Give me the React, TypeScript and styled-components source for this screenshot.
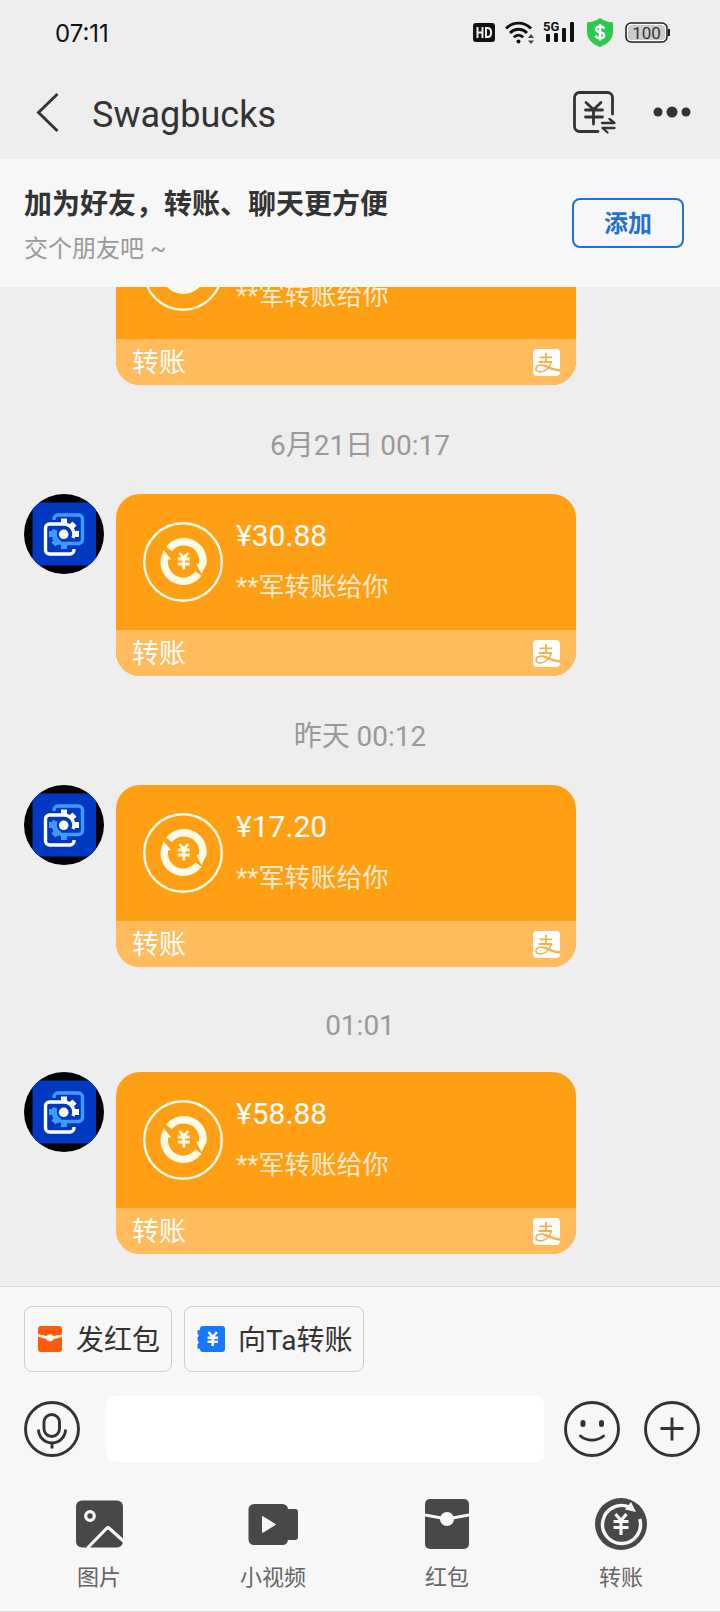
import React from 'react';
import styled, { createGlobalStyle } from 'styled-components';

const GlobalStyle = createGlobalStyle`
  *, *::before, *::after { box-sizing: border-box; }
  body {
    margin: 0;
    background: #eeeeee;
    color: #333333;
    font-family: Roboto, "Noto Sans CJK SC", sans-serif;
  }
  button, input { font: inherit; color: inherit; }
  svg { display: block; flex: none; }
`;

const Screen = styled.div`
  display: flex;
  flex-direction: column;
  height: 100vh;
`;

const StatusBar = styled.div`
  display: flex;
  align-items: center;
  justify-content: space-between;
  height: 65px;
  padding: 0 50px 0 55px;
  color: #111111;
`;

const Clock = styled.time`
  padding-top: 2px;
  font: 24px/32px Inter, Roboto, sans-serif;
`;

const StatusIcons = styled.div`
  display: flex;
  align-items: center;
`;

const StatusIcon = styled.span<{ $gap: number }>`
  margin-left: ${(p) => p.$gap}px;
`;

const Header = styled.header`
  display: flex;
  align-items: center;
  height: 94px;
  padding: 0 28px 0 32px;
`;

const Title = styled.h1`
  flex: 1;
  margin: 0;
  padding: 6px 0 0 32px;
  font-size: 36px;
  font-weight: 400;
  line-height: 44px;
`;

const IconButton = styled.button`
  display: flex;
  align-items: center;
  justify-content: center;
  flex: none;
  padding: 0;
  border: 0;
  background: none;
  cursor: pointer;
`;

const HeaderActions = styled.div`
  display: flex;
  align-items: center;
  gap: 36px;
`;

const FriendBanner = styled.section`
  display: flex;
  align-items: center;
  justify-content: space-between;
  height: 128px;
  flex: none;
  padding: 0 36px 0 24px;
  background: #f7f7f7;
`;

const BannerCopy = styled.div`
  padding-top: 4px;
`;

const BannerTitle = styled.h2`
  margin: 0;
  font-size: 28px;
  font-weight: 700;
  line-height: 48px;
`;

const BannerText = styled.p`
  margin: 0;
  font-size: 24px;
  line-height: 40px;
  color: #999999;
`;

const AddButton = styled.button`
  width: 112px;
  height: 50px;
  padding: 2px 0 0;
  border: 2px solid #1f72d2;
  border-radius: 8px;
  background: none;
  color: #1f72d2;
  font-size: 24px;
  font-weight: 700;
  line-height: 32px;
  cursor: pointer;
`;

const ChatScroller = styled.main`
  display: flex;
  flex: 1;
  flex-direction: column-reverse;
  min-height: 0;
  overflow-y: auto;
  scrollbar-width: none;
`;

const MessageList = styled.div`
  padding: 0 24px 32px;
`;

const Timestamp = styled.time<{ $short?: boolean }>`
  display: block;
  padding: 42px 0 29px;
  font-size: 28px;
  line-height: ${(p) => (p.$short ? 34 : 38)}px;
  text-align: center;
  color: #999999;
`;

const MessageRow = styled.article`
  display: flex;
  align-items: flex-start;
  gap: 12px;
`;

const Card = styled.a`
  display: block;
  width: 100%;
  max-width: 460px;
  overflow: hidden;
  border-radius: 24px;
  background: #ff9f14;
  color: #ffffff;
  text-decoration: none;
`;

const CardBody = styled.div`
  display: flex;
  gap: 13px;
  height: 136px;
  padding: 20px 27px 0;
`;

const CardIcon = styled.div`
  padding-top: 8px;
`;

const Amount = styled.div`
  height: 42px;
  font-size: 30px;
  line-height: 44px;
`;

const Note = styled.div`
  padding-top: 11px;
  font-size: 26px;
  line-height: 40px;
  color: rgba(255, 255, 255, 0.8);
`;

const CardFooter = styled.div`
  display: flex;
  align-items: center;
  justify-content: space-between;
  height: 46px;
  padding: 0 16px;
  background: #ffbb5c;
  font-size: 27px;
  line-height: 40px;
`;

const FooterLabel = styled.span`
  padding-top: 2px;
`;

const Composer = styled.footer`
  flex: none;
  padding-top: 19px;
  border-top: 1px solid #dcdcdc;
  border-bottom: 1px solid #dcdcdc;
  background: #f7f7f7;
`;

const QuickActions = styled.div`
  display: flex;
  gap: 12px;
  padding: 0 24px;
`;

const QuickButton = styled.button`
  display: flex;
  align-items: center;
  gap: 13px;
  height: 66px;
  padding: 0 11px 0 12px;
  border: 1px solid #cccccc;
  border-radius: 8px;
  background: none;
  font-size: 28px;
  line-height: 40px;
  cursor: pointer;
`;

const QuickLabel = styled.span`
  padding-top: 4px;
`;

const InputRow = styled.div`
  display: flex;
  align-items: center;
  gap: 20px;
  padding: 24px 20px 0 24px;
`;

const MessageInput = styled.input`
  flex: 1;
  min-width: 0;
  height: 66px;
  margin-left: 6px;
  padding: 0 16px;
  border: 0;
  border-radius: 8px;
  background: #ffffff;
  font-size: 28px;
`;

const InputActions = styled.div`
  display: flex;
  gap: 24px;
`;

const Tools = styled.nav`
  display: grid;
  grid-template-columns: repeat(4, 1fr);
  padding: 36px 12px 19px;
`;

const ToolButton = styled.button`
  display: flex;
  flex-direction: column;
  align-items: center;
  gap: 14px;
  padding: 0;
  border: 0;
  background: none;
  color: #666666;
  font-size: 22px;
  line-height: 28px;
  cursor: pointer;
`;

function HdIcon() {
  return (
    <svg width="22" height="19" viewBox="0 0 22 19">
      <rect width="22" height="19" rx="3" fill="#111" />
      <path d="M4.500 4v11M9.500 4v11M4.500 9.500h5M13 5v9h1.500c2.600 0 3.600-1.600 3.600-4.500S17 5 14.500 5z" fill="none" stroke="#eee" strokeWidth="2" />
    </svg>
  );
}

function WifiIcon() {
  return (
    <svg width="30" height="24" viewBox="0 0 30 24" fill="none" stroke="#111" strokeWidth="2.900">
      <path d="M1 7.500C8 .3 19 .3 26 7.500" />
      <path d="M5 12c5-5 12-5 17 0" />
      <path d="M8.800 16.300c2.800-2.800 6.600-2.800 9.400 0" />
      <circle cx="13.500" cy="20.500" r="2" fill="#111" stroke="none" />
      <path d="M23 17l3-4 3 4zM23 19.500l3 3.500 3-3.500z" fill="#444" stroke="none" />
    </svg>
  );
}

function SignalIcon() {
  return (
    <svg width="32" height="23" viewBox="0 0 32 23" fill="#111">
      <text x="0" y="10" fontFamily="Roboto, sans-serif" fontSize="13" fontWeight="700">5G</text>
      <rect x="3" y="13" width="4" height="8" rx="1" />
      <rect x="11" y="12" width="4" height="9" rx="1" />
      <rect x="19" y="7" width="4" height="14" rx="1" />
      <rect x="27" y="1" width="4" height="20" rx="1" />
    </svg>
  );
}

function ShieldIcon() {
  return (
    <svg width="26" height="29" viewBox="0 0 26 29">
      <path d="M13 0c3.500 2.600 8 4 13 4.500V14c0 7-5 12-13 15C5 26 0 21 0 14V4.500C5 4 9.500 2.600 13 0z" fill="#2dc84d" />
      <path d="M17.200 10.600c-.6-1.500-2-2.200-4.200-2.200-2.500 0-4 1.100-4 2.900 0 4.300 8.200 1.700 8.200 6 0 1.900-1.600 3-4.200 3-2.400 0-3.900-.9-4.400-2.600M13 6v16.500" fill="none" stroke="#fff" strokeWidth="2.400" />
    </svg>
  );
}

function BatteryIcon() {
  return (
    <svg width="45" height="21" viewBox="0 0 45 21">
      <rect x="1" y="1" width="41" height="19" rx="5" fill="#fff" stroke="#222" strokeWidth="1.600" />
      <rect x="3" y="3" width="37" height="15" rx="3" fill="#cccccc" />
      <path d="M44 7v7" stroke="#222" strokeWidth="2" />
      <text x="21.500" y="16.500" textAnchor="middle" fontFamily="Roboto, sans-serif" fontSize="17" fill="#333">100</text>
    </svg>
  );
}

function BackIcon() {
  return (
    <svg width="28" height="40" viewBox="0 0 28 40" fill="none" stroke="#333" strokeWidth="2.900">
      <path d="M25.500 2L6.500 20.500l19 18.500" />
    </svg>
  );
}

function LedgerIcon() {
  return (
    <svg width="43" height="43" viewBox="0 0 43 43" fill="none" stroke="#333" strokeWidth="2.800" strokeLinecap="round" strokeLinejoin="round">
      <path d="M25 40.500H6.500a5 5 0 0 1-5-5v-29a5 5 0 0 1 5-5h28a5 5 0 0 1 5 5V23" />
      <path d="M13 11.500l7.500 7 7.500-7M12.500 19h17M12.500 26h17M20.500 19v14" />
      <path d="M29 32h12.500l-5-4M41.500 37H29.500l5 4.500" strokeWidth="2.300" />
    </svg>
  );
}

function MoreIcon() {
  return (
    <svg width="40" height="14" viewBox="0 0 40 14" fill="#333">
      <circle cx="6" cy="7" r="4.500" />
      <circle cx="20" cy="7" r="5.500" />
      <circle cx="34" cy="7" r="4.500" />
    </svg>
  );
}

function Avatar() {
  return (
    <svg width="80" height="80" viewBox="0 0 80 80" fill="none" role="img" aria-label="Swagbucks">
      <circle cx="40" cy="40" r="40" fill="#000" />
      <path d="M8.500 15.500A40 40 0 0 1 15.500 8.500H64.500A40 40 0 0 1 72 16V64A40 40 0 0 1 64.500 71.500H15.500A40 40 0 0 1 8.500 64z" fill="#0038c2" />
      <g stroke="#3f9bff" strokeWidth="3.400">
        <path d="M30 26v-1a4 4 0 0 1 4-4h20.500a4 4 0 0 1 4 4v20.500a4 4 0 0 1-4 4H40A9.500 9.500 0 0 1 31.500 36" />
        <path d="M30 40h-5M33.500 46.500l-4 4M40 50v5" strokeWidth="6" />
        <path d="M36 49A10 10 0 0 1 31 36" strokeWidth="5" />
      </g>
      <g stroke="#fff" strokeWidth="3.400">
        <path d="M50 55v1a4 4 0 0 1-4 4H25.500a4 4 0 0 1-4-4V34a4 4 0 0 1 4-4H40a10 10 0 0 1 9 14" />
        <path d="M40 29.500v-5M46.500 33.500l4-4M50 40h5" strokeWidth="6" />
      </g>
      <circle cx="39.700" cy="40.300" r="4.800" fill="#fff" />
    </svg>
  );
}

function TransferBadge() {
  return (
    <svg width="80" height="80" viewBox="0 0 80 80" fill="none" stroke="#fffbe6">
      <circle cx="40" cy="40" r="38.800" strokeWidth="2.400" />
      <g strokeWidth="7.500">
        <path d="M26 27A19 19 0 0 1 59.500 43" />
        <path d="M55.500 51.500A19 19 0 0 1 21.600 36.500" />
      </g>
      <path d="M53 41.500l5.500 10.500L63 43zM28.200 37.500l-7.700-9.500-2.600 8.500z" fill="#fffbe6" stroke="none" />
      <path d="M36.300 31l4.500 5 4.500-5M34.800 37h12M34.800 42h12M40.800 36v11.500" strokeWidth="2.800" />
    </svg>
  );
}

function AlipayIcon() {
  return (
    <svg width="27" height="27" viewBox="0 0 27 27" fill="none" stroke="#f9b04a">
      <rect width="27" height="27" rx="4" fill="#fff" stroke="none" />
      <path d="M13 4v9M6.500 8.300h12.500M5.500 13h13.500" strokeWidth="1.800" />
      <path d="M18.500 13c-1.200 3.500-3 6-5.500 8-3 2.300-10 3-10-1.200 0-4.300 6-4.300 9.500-2.600" strokeWidth="1.600" />
      <path d="M11.500 16.500c5 2.500 9.500 4.300 15.500 5" strokeWidth="2.400" />
    </svg>
  );
}

function RedPacketIcon() {
  return (
    <svg width="26" height="26" viewBox="0 0 26 26">
      <path d="M4 0h18a3 3 0 0 1 3 3v5.500l-8.500 1.500a4.500 4.500 0 0 0-7 0L1 8V3a3 3 0 0 1 3-3z" fill="#ff5a0a" />
      <path d="M1 10.500l8 2.500a4.500 4.500 0 0 0 8 0l8-2V23a3 3 0 0 1-3 3H4a3 3 0 0 1-3-3z" fill="#ff5a0a" />
    </svg>
  );
}

function TransferNoteIcon() {
  return (
    <svg width="28" height="26" viewBox="0 0 28 26">
      <path d="M6 0h19a3 3 0 0 1 3 3v20a3 3 0 0 1-3 3H6a3 3 0 0 1-3-3l-2.500-.5v-4.300a2 2 0 0 0 0-3.600v-3.200a2 2 0 0 0 0-3.600V4.500L3 4V3a3 3 0 0 1 3-3z" fill="#1777ff" />
      <path d="M11.500 6l4.200 5 4.200-5M10.500 11.700h10.500M10.500 15.700h10.500M15.700 11v9" fill="none" stroke="#fff" strokeWidth="2.600" />
    </svg>
  );
}

const CircleSvg = ({ children }: { children: React.ReactNode }) => (
  <svg width="56" height="56" viewBox="0 0 56 56" fill="none" stroke="#333" strokeWidth="2.900">
    <circle cx="28" cy="28" r="26.500" />
    {children}
  </svg>
);

function MicIcon() {
  return (
    <CircleSvg>
      <rect x="20" y="13.500" width="15.500" height="22" rx="7.700" />
      <path d="M14.500 28.500a13.500 13.500 0 0 0 27 0M28 41.500v6" />
    </CircleSvg>
  );
}

function SmileIcon() {
  return (
    <CircleSvg>
      <path d="M19 21.500v2M37.500 21.500v2" strokeWidth="5" strokeLinecap="round" />
      <path d="M16.500 35c6.500 5.500 16.500 5.500 23 0" strokeLinecap="round" />
    </CircleSvg>
  );
}

function PlusIcon() {
  return (
    <CircleSvg>
      <path d="M28 16.500v23M16.500 27.500h23" />
    </CircleSvg>
  );
}

function PictureToolIcon() {
  return (
    <svg width="52" height="52" viewBox="0 0 52 52" fill="none">
      <rect x="3" y="2.500" width="47" height="47" rx="6" fill="#484848" />
      <circle cx="17" cy="18" r="4.300" stroke="#f7f7f7" strokeWidth="3.200" />
      <path d="M14.500 50l19-19.500q1.500-1.500 3 0L51 43.500" stroke="#f7f7f7" strokeWidth="3.200" />
    </svg>
  );
}

function VideoToolIcon() {
  return (
    <svg width="52" height="52" viewBox="0 0 52 52">
      <rect x="1.500" y="6" width="39.500" height="41" rx="5.500" fill="#484848" />
      <path d="M40 11h8a3 3 0 0 1 3 3v25a3 3 0 0 1-3 3h-8z" fill="#484848" />
      <path d="M15.500 18.500l13 8-13 8z" fill="#f7f7f7" stroke="#f7f7f7" strokeLinejoin="round" />
    </svg>
  );
}

function PacketToolIcon() {
  return (
    <svg width="52" height="52" viewBox="0 0 52 52">
      <rect x="4" y="1" width="44" height="50" rx="5" fill="#484848" />
      <path d="M4 17l22 4 22-4" fill="none" stroke="#f7f7f7" strokeWidth="2.800" />
      <circle cx="26" cy="21" r="7" fill="#f7f7f7" />
    </svg>
  );
}

function TransferToolIcon() {
  return (
    <svg width="52" height="52" viewBox="0 0 52 52" fill="none" stroke="#f7f7f7">
      <circle cx="26" cy="26" r="26" fill="#484848" stroke="none" />
      <path d="M44.700 21A19 19 0 1 1 35 9.500" strokeWidth="3.400" />
      <path d="M36 4l5 10-11-2.500z" fill="#f7f7f7" stroke="none" />
      <path d="M20.500 16l5.500 6.500 5.500-6.500M18.500 23.500h15M18.500 29.500h15M26 22.500V37" strokeWidth="3.200" />
    </svg>
  );
}

function TransferMessage({ amount }: { amount?: string }) {
  return (
    <MessageRow>
      <Avatar />
      <Card href="#">
        <CardBody>
          <CardIcon><TransferBadge /></CardIcon>
          <div>
            <Amount>{amount}</Amount>
            <Note>**军转账给你</Note>
          </div>
        </CardBody>
        <CardFooter>
          <FooterLabel>转账</FooterLabel>
          <AlipayIcon />
        </CardFooter>
      </Card>
    </MessageRow>
  );
}

const tools = [
  { label: '图片', Icon: PictureToolIcon },
  { label: '小视频', Icon: VideoToolIcon },
  { label: '红包', Icon: PacketToolIcon },
  { label: '转账', Icon: TransferToolIcon },
];

export default function App() {
  return (
    <Screen lang="zh-CN">
      <GlobalStyle />
      <StatusBar>
        <Clock>07:11</Clock>
        <StatusIcons>
          <StatusIcon $gap={0}><HdIcon /></StatusIcon>
          <StatusIcon $gap={10}><WifiIcon /></StatusIcon>
          <StatusIcon $gap={8}><SignalIcon /></StatusIcon>
          <StatusIcon $gap={12}><ShieldIcon /></StatusIcon>
          <StatusIcon $gap={12}><BatteryIcon /></StatusIcon>
        </StatusIcons>
      </StatusBar>

      <Header>
        <IconButton aria-label="返回"><BackIcon /></IconButton>
        <Title>Swagbucks</Title>
        <HeaderActions>
          <IconButton aria-label="转账记录"><LedgerIcon /></IconButton>
          <IconButton aria-label="更多"><MoreIcon /></IconButton>
        </HeaderActions>
      </Header>

      <FriendBanner>
        <BannerCopy>
          <BannerTitle>加为好友，转账、聊天更方便</BannerTitle>
          <BannerText>交个朋友吧 ~</BannerText>
        </BannerCopy>
        <AddButton>添加</AddButton>
      </FriendBanner>

      <ChatScroller>
        <MessageList>
          <TransferMessage />
          <Timestamp>6月21日 00:17</Timestamp>
          <TransferMessage amount="¥30.88" />
          <Timestamp>昨天 00:12</Timestamp>
          <TransferMessage amount="¥17.20" />
          <Timestamp $short>01:01</Timestamp>
          <TransferMessage amount="¥58.88" />
        </MessageList>
      </ChatScroller>

      <Composer>
        <QuickActions>
          <QuickButton><RedPacketIcon /><QuickLabel>发红包</QuickLabel></QuickButton>
          <QuickButton><TransferNoteIcon /><QuickLabel>向Ta转账</QuickLabel></QuickButton>
        </QuickActions>
        <InputRow>
          <IconButton aria-label="语音"><MicIcon /></IconButton>
          <MessageInput type="text" aria-label="消息" />
          <InputActions>
            <IconButton aria-label="表情"><SmileIcon /></IconButton>
            <IconButton aria-label="添加更多"><PlusIcon /></IconButton>
          </InputActions>
        </InputRow>
        <Tools>
          {tools.map(({ label, Icon }) => (
            <ToolButton key={label}><Icon />{label}</ToolButton>
          ))}
        </Tools>
      </Composer>
    </Screen>
  );
}
